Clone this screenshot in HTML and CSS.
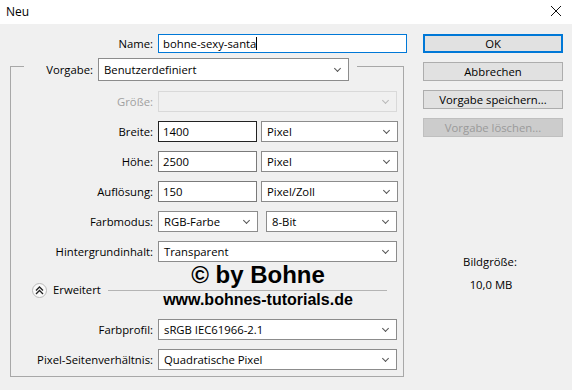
FILE: index.html
```
<!DOCTYPE html>
<html lang="de">
<head>
<meta charset="utf-8">
<title>Neu</title>
<link rel="stylesheet" href="styles.css">
</head>
<body>
<div class="titlebar">
  <span class="title">Neu</span>
  <svg class="close" width="12" height="12" viewBox="0 0 12 12"><path d="M1 1 L11 11 M11 1 L1 11" stroke="#111" stroke-width="1" fill="none"/></svg>
</div>
<div class="dialog">
  <div class="left">
    <div class="name-row">
      <span class="lbl name-lbl">Name:</span>
      <div class="field focus"><span>bohne-sexy-santa</span><span class="caret"></span></div>
    </div>
    <div class="group">
      <div class="group-head">
        <div class="seg seg-l"></div>
        <span class="lbl head-lbl">Vorgabe:</span>
        <div class="select vorgabe">Benutzerdefiniert</div>
        <div class="seg seg-r"></div>
      </div>
      <div class="group-body">
        <div class="row"><span class="lbl disabled">Größe:</span><div class="select full off"></div></div>
        <div class="row"><span class="lbl">Breite:</span><div class="field num hot">1400</div><div class="select unit">Pixel</div></div>
        <div class="row"><span class="lbl">Höhe:</span><div class="field num">2500</div><div class="select unit">Pixel</div></div>
        <div class="row"><span class="lbl">Auflösung:</span><div class="field num">150</div><div class="select unit">Pixel/Zoll</div></div>
        <div class="row"><span class="lbl">Farbmodus:</span><div class="select mode">RGB-Farbe</div><div class="select bits">8-Bit</div></div>
        <div class="row"><span class="lbl">Hintergrundinhalt:</span><div class="select full">Transparent</div></div>
        <div class="adv-row">
          <span class="adv-btn"><svg width="9" height="9" viewBox="0 0 9 9"><path d="M1 4.5 L4.5 1 L8 4.5 M1 8 L4.5 4.5 L8 8" stroke="#222" stroke-width="1.3" fill="none"/></svg></span>
          <span class="adv-text">Erweitert</span>
          <span class="adv-line"></span>
        </div>
        <div class="row prof"><span class="lbl">Farbprofil:</span><div class="select full">sRGB IEC61966-2.1</div></div>
        <div class="row"><span class="lbl">Pixel-Seitenverhältnis:</span><div class="select full">Quadratische Pixel</div></div>
        <div class="watermark">
          <div class="wm1">© by Bohne</div>
          <div class="wm2">www.bohnes-tutorials.de</div>
        </div>
      </div>
    </div>
  </div>
  <div class="right">
    <div class="btn default">OK</div>
    <div class="btn">Abbrechen</div>
    <div class="btn">Vorgabe speichern...</div>
    <div class="btn off">Vorgabe löschen...</div>
    <div class="size-lbl">Bildgröße:</div>
    <div class="size-val">10,0 MB</div>
  </div>
</div>
</body>
</html>
```
FILE: styles.css
```
* { box-sizing: border-box; }
html, body { margin: 0; padding: 0; }
body {
  width: 572px;
  height: 390px;
  background: #f0f0f0;
  font-family: "Open Sans", "Noto Sans", sans-serif;
  font-size: 11.3px;
  color: #000;
  overflow: hidden;
}
.titlebar {
  height: 24px;
  background: #fff;
  display: flex;
  align-items: center;
  justify-content: space-between;
  padding: 0 10px 2px 6px;
}
.title { font-size: 12px; color: #000; }
.close { display: block; }

.dialog {
  display: flex;
  padding-top: 10px;
}
.left { width: 414px; }
.right {
  margin-left: 9px;
  width: 140px;
  display: flex;
  flex-direction: column;
}

.lbl {
  text-align: right;
  white-space: nowrap;
  line-height: 21px;
}
.lbl.disabled { color: #a0a0a0; }

.name-row { display: flex; height: 19px; }
.name-lbl { width: 153px; line-height: 19px; }

.field {
  background: #fff;
  border: 1px solid #7a7a7a;
  height: 21px;
  line-height: 19px;
  padding-left: 4px;
  white-space: nowrap;
  display: flex;
  align-items: center;
}
.name-row .field {
  margin-left: 5px;
  width: 249px;
  height: 19px;
  line-height: 17px;
}
.field.focus { border-color: #0078d7; }
.field.hot { border-color: #222; }
.caret { display: inline-block; width: 1px; height: 13px; background: #000; margin-left: 0; }

.group { margin-left: 10px; width: 394px; margin-top: 5px; }
.group-head { display: flex; height: 23px; }
.seg { margin-top: 8px; border-top: 1px solid #a8a8a8; }
.seg-l { width: 14px; border-left: 1px solid #a8a8a8; }
.seg-r { flex: 1; margin-left: 8px; border-right: 1px solid #a8a8a8; }
.head-lbl { width: 69px; margin-right: 5px; line-height: 23px; }

.select {
  position: relative;
  background: #fff;
  border: 1px solid #8c8c8c;
  height: 21px;
  line-height: 19px;
  padding-left: 5px;
  white-space: nowrap;
}
.select::after {
  content: "";
  position: absolute;
  right: 8px;
  top: 6px;
  width: 4px;
  height: 4px;
  border-right: 1px solid #555;
  border-bottom: 1px solid #555;
  transform: rotate(45deg);
}
.select.vorgabe { width: 251px; height: 23px; line-height: 21px; }
.select.vorgabe::after { top: 7px; }
.select.off { background: #f0f0f0; border-color: #d9d9d9; }
.select.off::after { border-color: #b8b8b8; }

.group-body {
  position: relative;
  border: 1px solid #a8a8a8;
  border-top: none;
  padding: 10px 0 6px 0;
}
.row { display: flex; height: 21px; margin-top: 9px; }
.row:first-child { margin-top: 0; }
.row .lbl { width: 142px; margin-right: 5px; }
.select.full { width: 239px; }
.field.num { width: 99px; }
.select.unit { width: 137px; margin-left: 4px; }
.select.mode { width: 100px; }
.select.bits { width: 131px; margin-left: 8px; }
.row.prof { margin-top: 21px; }

.adv-row {
  display: flex;
  align-items: center;
  height: 16px;
  margin-top: 20px;
  padding-left: 21px;
}
.adv-btn {
  width: 15px;
  height: 15px;
  border-radius: 50%;
  border: 1px solid #b9b9b9;
  background: #fafafa;
  display: flex;
  align-items: center;
  justify-content: center;
}
.adv-btn svg { display: block; }
.adv-text { margin-left: 6px; line-height: 16px; }
.adv-line { flex: 1; margin-left: 7px; margin-right: 16px; border-top: 1px solid #b4b4b4; }

.watermark {
  position: absolute;
  left: 127px;
  top: 182px;
  width: 240px;
  text-align: center;
  font-family: "Liberation Sans", Arial, sans-serif;
  font-weight: bold;
  color: #000;
}
.wm1 { font-size: 24px; line-height: 24px; }
.wm2 { font-size: 16px; line-height: 16px; margin-top: 5px; }

.btn {
  height: 19px;
  margin-bottom: 9px;
  background: #e1e1e1;
  border: 1px solid #adadad;
  text-align: center;
  line-height: 17px;
  white-space: nowrap;
}
.btn.default { border: 2px solid #0078d7; line-height: 15px; }
.btn.off { background: #cccccc; border-color: #bfbfbf; color: #9a9a9a; }
.size-lbl { margin-top: 108px; text-align: center; line-height: 16px; padding-right: 6px; }
.size-val { margin-top: 7px; text-align: center; line-height: 16px; padding-right: 4px; }
```
